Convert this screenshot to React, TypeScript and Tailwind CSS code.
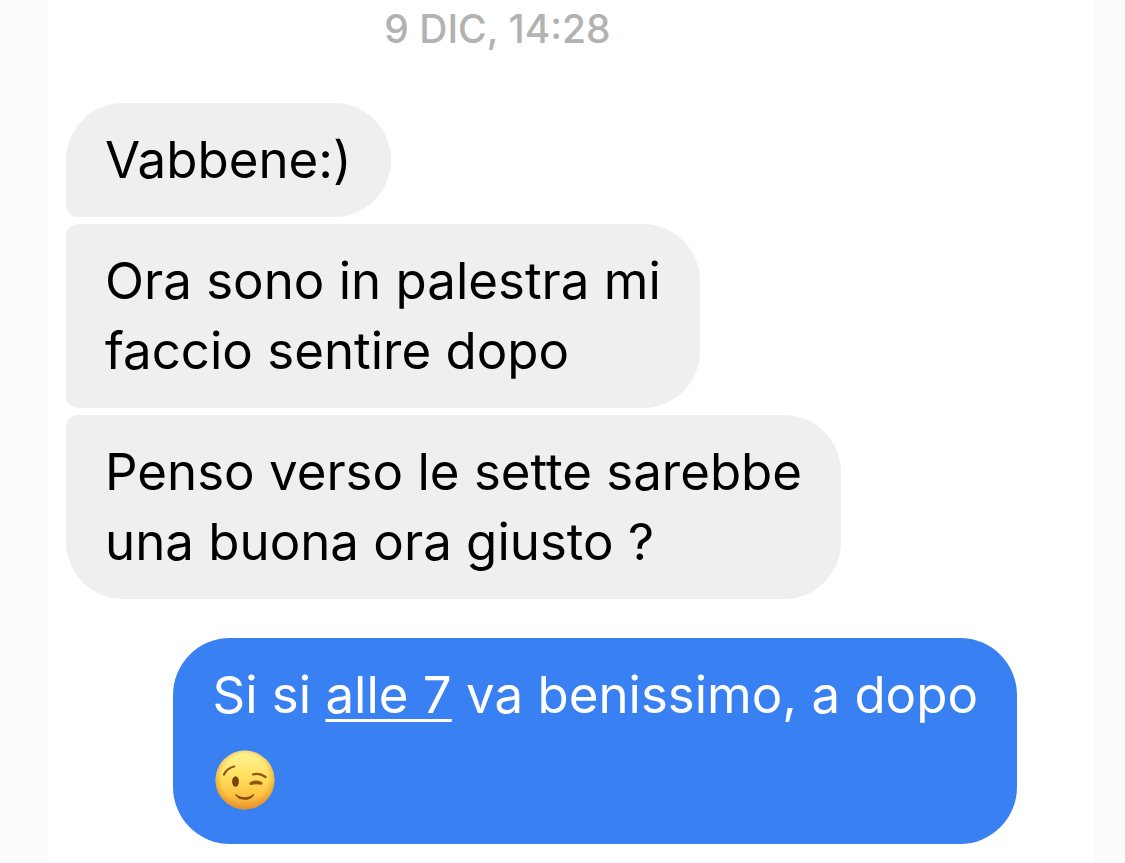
import type { ReactNode } from "react";

function Bubble({ className, children }: { className: string; children: ReactNode }) {
  return (
    <li className={`w-fit px-[39px] py-[22px] text-[51px] leading-[70px] ${className}`}>
      {children}
    </li>
  );
}

function WinkingFace() {
  return (
    <svg viewBox="0 0 60 60" className="size-[60px]" role="img" aria-label="Faccina che fa l'occhiolino">
      <defs>
        <linearGradient id="face" x1="0" y1="0" x2="0" y2="1">
          <stop offset="0" stopColor="#fff59a" />
          <stop offset="0.4" stopColor="#ffe263" />
          <stop offset="0.75" stopColor="#fdc544" />
          <stop offset="1" stopColor="#ee9c35" />
        </linearGradient>
        <radialGradient id="edge" cx="0.5" cy="0.46" r="0.54">
          <stop offset="0.72" stopColor="#f0a02c" stopOpacity="0" />
          <stop offset="1" stopColor="#e08a25" stopOpacity="0.75" />
        </radialGradient>
      </defs>
      <circle cx="30" cy="30" r="29.5" fill="url(#face)" />
      <circle cx="30" cy="30" r="29.5" fill="url(#edge)" />
      <ellipse cx="20.5" cy="31.5" rx="3.4" ry="5.2" fill="#78430c" />
      <g fill="none" stroke="#915512" strokeWidth="2.3" strokeLinecap="round" strokeLinejoin="round">
        <path d="M9 24.5C11 20.5 14.5 17.500 19 16.500" />
        <path d="M38 24.500C42.500 23.200 47 24.300 50.500 27" />
        <path d="M35.500 33.500C38.500 31.200 43.500 31 46.500 33.300M36 33.800C39.500 33 43 33 46 33.500" />
      </g>
      <path d="M21 44C26 48.300 33.500 48.300 38.200 44C38.600 43.700 39.300 44.200 39 44.900C35.500 51.500 24 51.500 20.300 45C20 44.300 20.500 43.700 21 44Z" fill="#85500f" />
    </svg>
  );
}

export default function App() {
  return (
    <div className="flex min-h-screen bg-[#fcfcfc] pr-[31px] pl-12 font-['Inter',sans-serif]">
      <main className="flex grow flex-col bg-white pt-[7px] pr-[77px] pl-[18px]">
        <time className="mr-[88px] self-center text-[39px] leading-[44px] font-medium text-[#b2b2b2]">
          9 DIC, 14:28
        </time>
        <ol className="mt-[52px] flex flex-col gap-[7px] text-black">
          <Bubble className="rounded-[57px] rounded-bl-[12px] bg-[#efefef]">Vabbene:)</Bubble>
          <Bubble className="rounded-l-[12px] rounded-r-[57px] bg-[#efefef]">
            Ora sono in palestra mi
            <br />
            faccio sentire dopo
          </Bubble>
          <Bubble className="rounded-[57px] rounded-tl-[12px] bg-[#efefef]">
            Penso verso le sette sarebbe
            <br />
            una buona ora giusto ?
          </Bubble>
          <Bubble className="mt-8 self-end rounded-[57px] bg-[#3981f3] text-white">
            Si si{" "}
            <a href="#alle-7" className="underline decoration-[3px] underline-offset-[6px]">
              alle 7
            </a>{" "}
            va benissimo, a dopo
            <span className="flex h-[92px] items-center pt-2 pl-[3px]">
              <WinkingFace />
            </span>
          </Bubble>
        </ol>
      </main>
    </div>
  );
}
